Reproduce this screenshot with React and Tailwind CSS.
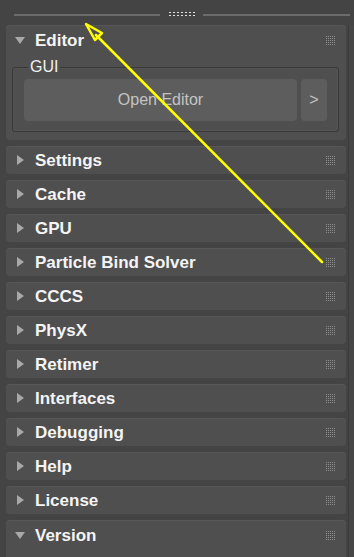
import React from "react";

const Grip = () => (
  <svg width="9" height="9" viewBox="0 0 9 9" className="shrink-0">
    {[0, 2, 4, 6, 8].map((y) =>
      [0, 2, 4, 6, 8].map((x) => (
        <rect key={`${x}-${y}`} x={x} y={y} width="1" height="1" fill="#8e8e8e" />
      ))
    )}
  </svg>
);

const TriRight = () => (
  <svg width="7" height="10" viewBox="0 0 7 10" className="shrink-0">
    <polygon points="0,0 7,5 0,10" fill="#a8a8a8" />
  </svg>
);

const TriDown = () => (
  <svg width="10" height="7" viewBox="0 0 10 7" className="shrink-0">
    <polygon points="0,0 10,0 5,7" fill="#a8a8a8" />
  </svg>
);

const Row = ({ title }) => (
  <div className="h-[28px] shrink-0 rounded-[4px] bg-[#4f4f4f] shadow-[inset_0_1px_0_#575757] flex items-center pl-[11px] pr-[11px]">
    <TriRight />
    <span className="ml-[11px] text-[17px] font-bold text-[#f4f4f4] leading-none">{title}</span>
    <div className="ml-auto">
      <Grip />
    </div>
  </div>
);

export default function App() {
  const rows = [
    "Settings",
    "Cache",
    "GPU",
    "Particle Bind Solver",
    "CCCS",
    "PhysX",
    "Retimer",
    "Interfaces",
    "Debugging",
    "Help",
    "License",
  ];
  const dots = [0, 1, 2, 3, 4, 5, 6];
  return (
    <div
      className="relative w-[354px] h-[557px] overflow-hidden bg-[#444444]"
      style={{ fontFamily: '"Liberation Sans", Arial, sans-serif' }}
    >
      {/* top splitter */}
      <div className="h-[25px] flex items-start pt-[12px] pl-[14px]">
        <div className="w-[146px] h-[2px] mt-[2px] bg-[#6b6b6b]" />
        <svg width="27" height="5" viewBox="0 0 27 5" className="ml-[9px]">
          {dots.map((i) => (
            <rect key={`a${i}`} x={i * 4} y="0" width="2" height="1" fill="#e0e0e0" />
          ))}
          {dots.map((i) => (
            <rect key={`b${i}`} x={i * 4} y="3" width="2" height="1" fill="#e0e0e0" />
          ))}
        </svg>
        <div className="ml-[7px] w-[147px] h-[2px] mt-[2px] bg-[#6b6b6b]" />
      </div>

      <div className="flex">
        <div className="w-[348px] pl-[6px] pr-[2px] flex flex-col gap-[6px]">
          {/* Editor */}
          <div className="h-[115px] shrink-0 rounded-[4px] bg-[#4f4f4f] shadow-[inset_0_1px_0_#575757] flex flex-col">
            <div className="h-[30px] shrink-0 flex items-center pl-[9px] pr-[11px]">
              <TriDown />
              <span className="ml-[10px] text-[17px] font-bold text-[#f4f4f4] leading-none">Editor</span>
              <div className="ml-auto">
                <Grip />
              </div>
            </div>
            <fieldset className="ml-[6px] mr-[7px] mt-[3px] border border-[#383838] rounded-[3px] px-[11px] pb-[10px] shadow-[inset_0_0_0_1px_#535353]">
              <legend className="ml-[4px] px-[2px] text-[16px] leading-[18px] text-[#f0f0f0]">GUI</legend>
              <div className="flex gap-[4px] mt-[3px]">
                <button className="flex-1 h-[42px] rounded-[4px] bg-[#5d5d5d] text-[16px] text-[#c4c4c4] flex items-center justify-center">
                  Open Editor
                </button>
                <button className="w-[26px] h-[42px] rounded-[4px] bg-[#5d5d5d] text-[16px] text-[#c4c4c4] flex items-center justify-center">
                  &gt;
                </button>
              </div>
            </fieldset>
          </div>

          {rows.map((r) => (
            <Row key={r} title={r} />
          ))}

          {/* Version */}
          <div className="h-[60px] shrink-0 rounded-[4px] bg-[#4f4f4f] shadow-[inset_0_1px_0_#575757] flex flex-col">
            <div className="h-[30px] flex items-center pl-[9px] pr-[11px]">
              <TriDown />
              <span className="ml-[10px] text-[17px] font-bold text-[#f4f4f4] leading-none">Version</span>
              <div className="ml-auto">
                <Grip />
              </div>
            </div>
          </div>
        </div>
        <div className="w-[1px] bg-[#3a3a3a]" />
        <div className="flex-1 bg-[#464646]" />
      </div>

      {/* annotation arrow */}
      <svg
        className="absolute inset-0 pointer-events-none"
        width="354"
        height="557"
        viewBox="0 0 354 557"
      >
        <line x1="322" y1="262" x2="96" y2="35" stroke="#ffff00" strokeWidth="2.5" strokeLinecap="round" />
        <polygon
          points="86,24 102,33 95,40"
          fill="none"
          stroke="#ffff00"
          strokeWidth="2.5"
          strokeLinejoin="round"
        />
      </svg>
    </div>
  );
}
